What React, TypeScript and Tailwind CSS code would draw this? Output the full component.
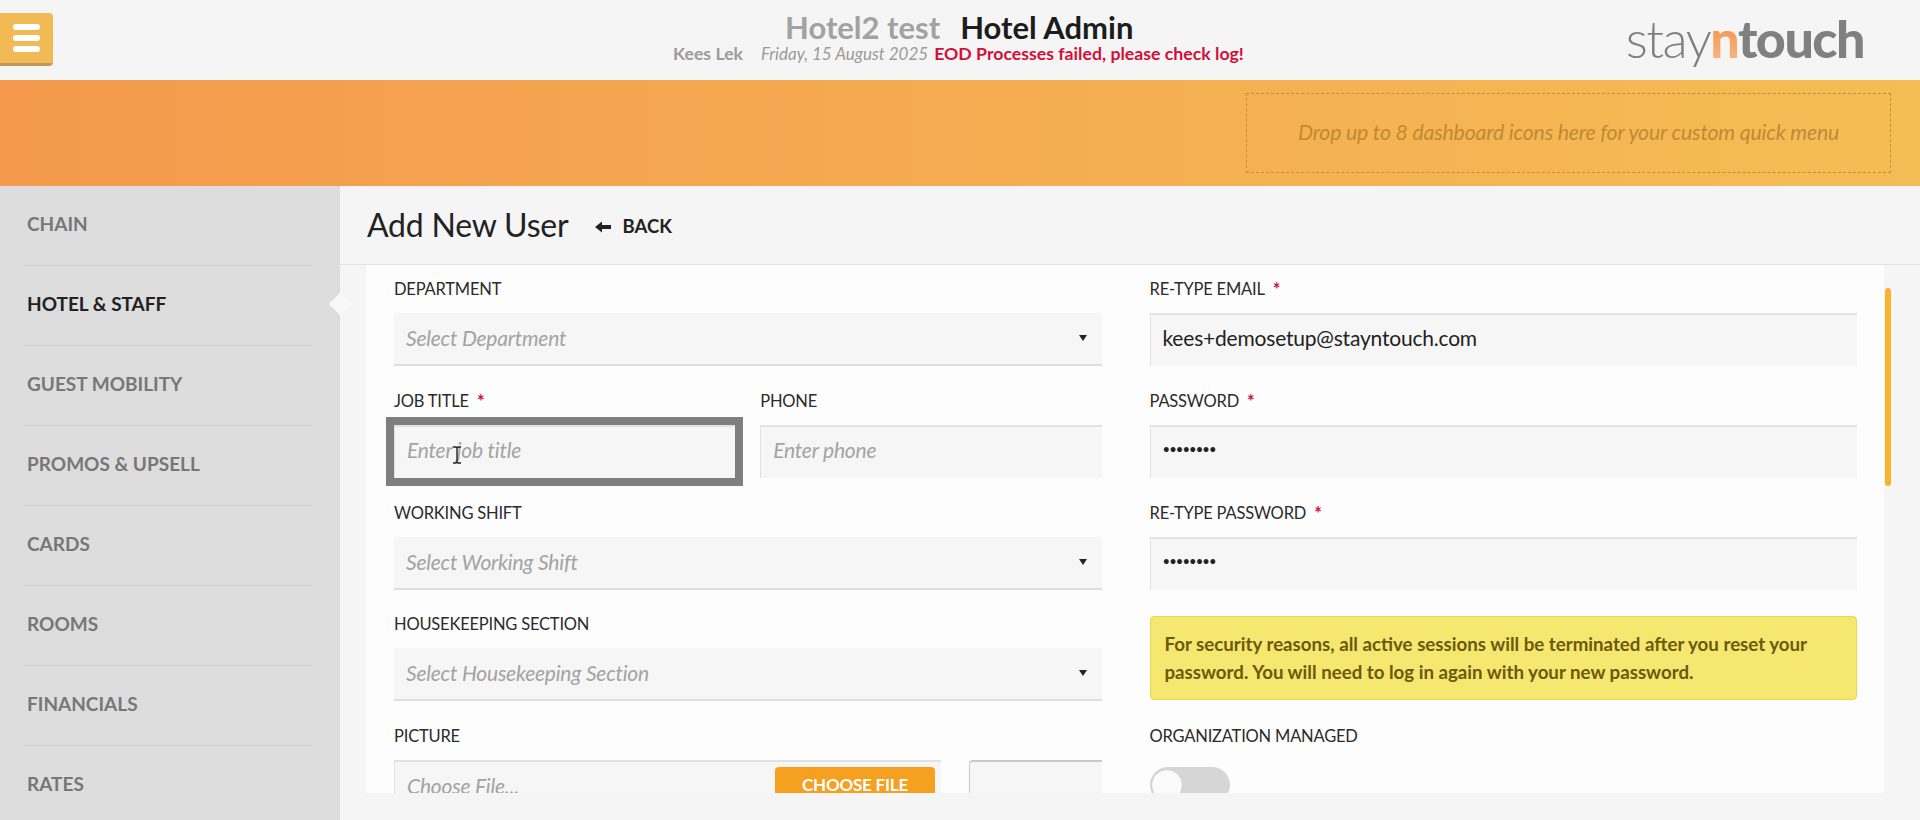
import React from 'react';

const navItems = ['CHAIN', 'HOTEL & STAFF', 'GUEST MOBILITY', 'PROMOS & UPSELL', 'CARDS', 'ROOMS', 'FINANCIALS', 'RATES'];

function Label({ text, required }: { text: string; required?: boolean }) {
  return (
    <div className="h-6 mb-3 flex items-center text-[16.5px] text-[#2b2b2b] tracking-[-0.2px]">
      {text}
      {required && <span className="ml-2 text-[18px] text-[#d0103a] font-bold">*</span>}
    </div>
  );
}

function TextBox({ value, placeholder, dots }: { value?: string; placeholder?: string; dots?: boolean }) {
  return (
    <div className="h-[53px] bg-[#f6f6f6] border-t-2 border-l border-[#e2e2e2] px-3 pb-[6px] flex items-center text-[21px] tracking-[-0.2px]">
      {placeholder && <span className="italic text-[#a3a3a3]">{placeholder}</span>}
      {value && <span className={dots ? 'text-[#222] text-[13px] tracking-[-0.9px]' : 'text-[#222]'}>{value}</span>}
    </div>
  );
}

function SelectBox({ placeholder }: { placeholder: string }) {
  return (
    <div className="h-[53px] bg-[#f6f6f6] border-b-2 border-[#dedede] pl-3 pr-[15px] pb-[1px] flex items-center justify-between text-[21px] tracking-[-0.2px]">
      <span className="italic text-[#a3a3a3]">{placeholder}</span>
      <span className="w-0 h-0 border-x-[4px] border-x-transparent border-t-[6px] border-t-[#222]" />
    </div>
  );
}

export default function App() {
  return (
    <div className="h-[820px] w-[1920px] overflow-hidden bg-[#f5f5f5] font-[Lato,sans-serif] flex flex-col relative">
      {/* top bar */}
      <header className="h-20 flex items-center justify-between shrink-0 relative">
        <button className="w-[53px] h-[53px] mb-[1px] bg-[#f2ba55] border-b-[3px] border-[#c29a56] rounded-r-sm flex flex-col items-center justify-center gap-[5px]">
          <span className="w-[27px] h-[6px] bg-white rounded-sm" />
          <span className="w-[27px] h-[6px] bg-white rounded-sm" />
          <span className="w-[27px] h-[6px] bg-white rounded-sm" />
        </button>
        <div className="absolute left-[673px] top-[9px] w-[600px]">
          <div className="h-[36px] pl-[112px] flex items-center gap-[20px] text-[31px] font-bold whitespace-nowrap">
            <span className="text-[#a2a2a2]">Hotel2 test</span>
            <span className="text-[#1c1c1c]">Hotel Admin</span>
          </div>
          <div className="flex items-center text-[17.7px] whitespace-nowrap -mt-[1px] leading-[20px]">
            <span className="font-bold text-[#9b9b9b] mr-4">Kees Lek</span>
            <span className="italic text-[17px] text-[#9b9b9b] mr-[6px] ml-[2px]">Friday, 15 August 2025</span>
            <span className="font-bold text-[#d0103a]">EOD Processes failed, please check log!</span>
          </div>
        </div>
        <div className="mr-[56px] text-[52px] leading-none tracking-[-1.5px] mb-[4px] whitespace-nowrap">
          <span className="font-light text-[#808080]">stay</span>
          <span className="font-black text-transparent bg-clip-text bg-gradient-to-b from-[#f0832a] to-[#f8bd8c]">n</span>
          <span className="font-black text-[#808080]">touch</span>
        </div>
      </header>

      {/* orange band */}
      <div className="h-[106px] shrink-0 bg-gradient-to-r from-[#f4994d] to-[#f5bd55] flex justify-end pr-[29px] items-center">
        <div className="w-[645px] h-[80px] border border-dashed border-[#c98d38] flex items-center justify-center italic text-[21.3px] text-[#c08a35] tracking-[-0.2px]">
          Drop up to 8 dashboard icons here for your custom quick menu
        </div>
      </div>

      <div className="flex flex-1 min-h-0">
        {/* sidebar */}
        <nav className="w-[340px] shrink-0 bg-[#dddddd] pl-6 pr-7 relative">
          {navItems.map((item) => (
            <div key={item} className={`h-20 border-b border-[#cdcdcd] flex items-center pl-[3px] pb-[2px] text-[19px] font-bold ${item === 'HOTEL & STAFF' ? 'text-[#222]' : 'text-[#777]'}`}>
              {item}
            </div>
          ))}
          <span className="absolute right-[-8px] top-[110px] w-4 h-4 rotate-45 bg-[#f8f8f8]" />
        </nav>

        <main className="flex-1 min-w-0 relative">
          <div className="h-[79px] pl-[27px] flex items-center border-b border-[#e2e2e2]">
            <h1 className="text-[32px] text-[#222] tracking-[-0.2px]">Add New User</h1>
            <svg className="ml-[27px] mt-[3px]" width="16" height="12" viewBox="0 0 16 12">
              <path d="M0 6 L7 0.5 V4 H16 V8 H7 V11.5 Z" fill="#222" />
            </svg>
            <span className="ml-[11px] mt-[4px] text-[18.5px] font-bold text-[#222]">BACK</span>
          </div>

          {/* form panel */}
          <div className="ml-[26px] w-[1518px] h-[528px] bg-[#fdfdfd] overflow-hidden pt-[12px] pl-[28px] pr-[27px] grid grid-cols-2 gap-x-12">
            <div>
              <Label text="DEPARTMENT" />
              <SelectBox placeholder="Select Department" />
              <div className="grid grid-cols-2 gap-x-[25px] mt-[23px]">
                <div>
                  <Label text="JOB TITLE" required />
                  <div className="outline-8 outline-[#7f7f7f]">
                    <TextBox placeholder="Enter job title" />
                  </div>
                </div>
                <div>
                  <Label text="PHONE" />
                  <TextBox placeholder="Enter phone" />
                </div>
              </div>
              <div className="mt-[23px]">
                <Label text="WORKING SHIFT" />
                <SelectBox placeholder="Select Working Shift" />
              </div>
              <div className="mt-[22px]">
                <Label text="HOUSEKEEPING SECTION" />
                <SelectBox placeholder="Select Housekeeping Section" />
              </div>
              <div className="mt-[23px]">
                <Label text="PICTURE" />
                <div className="flex justify-between">
                  <div className="w-[547px] h-[53px] bg-[#f6f6f6] border-t-2 border-l border-[#e2e2e2] pl-3 pr-[6px] pt-[5px] flex items-start justify-between text-[21px] tracking-[-0.2px]">
                    <span className="italic text-[#a3a3a3] mt-[3px]">Choose File...</span>
                    <span className="w-[160px] h-[36px] bg-[#f5a01f] rounded-sm text-white font-bold text-[17px] flex items-center justify-center">CHOOSE FILE</span>
                  </div>
                  <div className="w-[133px] h-[53px] bg-[#f6f6f6] border-t-2 border-l border-[#c9c9c9] rounded-tl-sm" />
                </div>
              </div>
            </div>

            <div>
              <Label text="RE-TYPE EMAIL" required />
              <TextBox value="kees+demosetup@stayntouch.com" />
              <div className="mt-[23px]">
                <Label text="PASSWORD" required />
                <TextBox value="••••••••" dots />
              </div>
              <div className="mt-[23px]">
                <Label text="RE-TYPE PASSWORD" required />
                <TextBox value="••••••••" dots />
              </div>
              <div className="mt-[26px] h-[84px] bg-[#f5e76f] border border-[#eed64a] rounded-sm px-[14px] flex items-center text-[18.7px] leading-[28px] font-bold text-[#6b5a0c]">
                For security reasons, all active sessions will be terminated after you reset your password. You will need to log in again with your new password.
              </div>
              <div className="mt-6">
                <Label text="ORGANIZATION MANAGED" />
                <div className="w-[80px] h-[36px] mt-[19px] rounded-full bg-[#d6d6d6] flex items-center">
                  <span className="w-[32px] h-[32px] ml-[1px] rounded-full bg-[#fbfbfb] border border-[#cfcfcf]" />
                </div>
              </div>
            </div>
          </div>

          {/* overlay scrollbar and text cursor */}
          <span className="absolute left-[1545px] top-[102px] w-[6px] h-[198px] rounded-full bg-[#f6b42a]" />
          <svg className="absolute left-[112px] top-[260px]" width="10" height="18" viewBox="0 0 10 18">
            <path d="M1 1 H4 L5 2 L6 1 H9 M5 2 V16 M1 17 H4 L5 16 L6 17 H9" fill="none" stroke="#222" strokeWidth="1.4" />
          </svg>
        </main>
      </div>
    </div>
  );
}
